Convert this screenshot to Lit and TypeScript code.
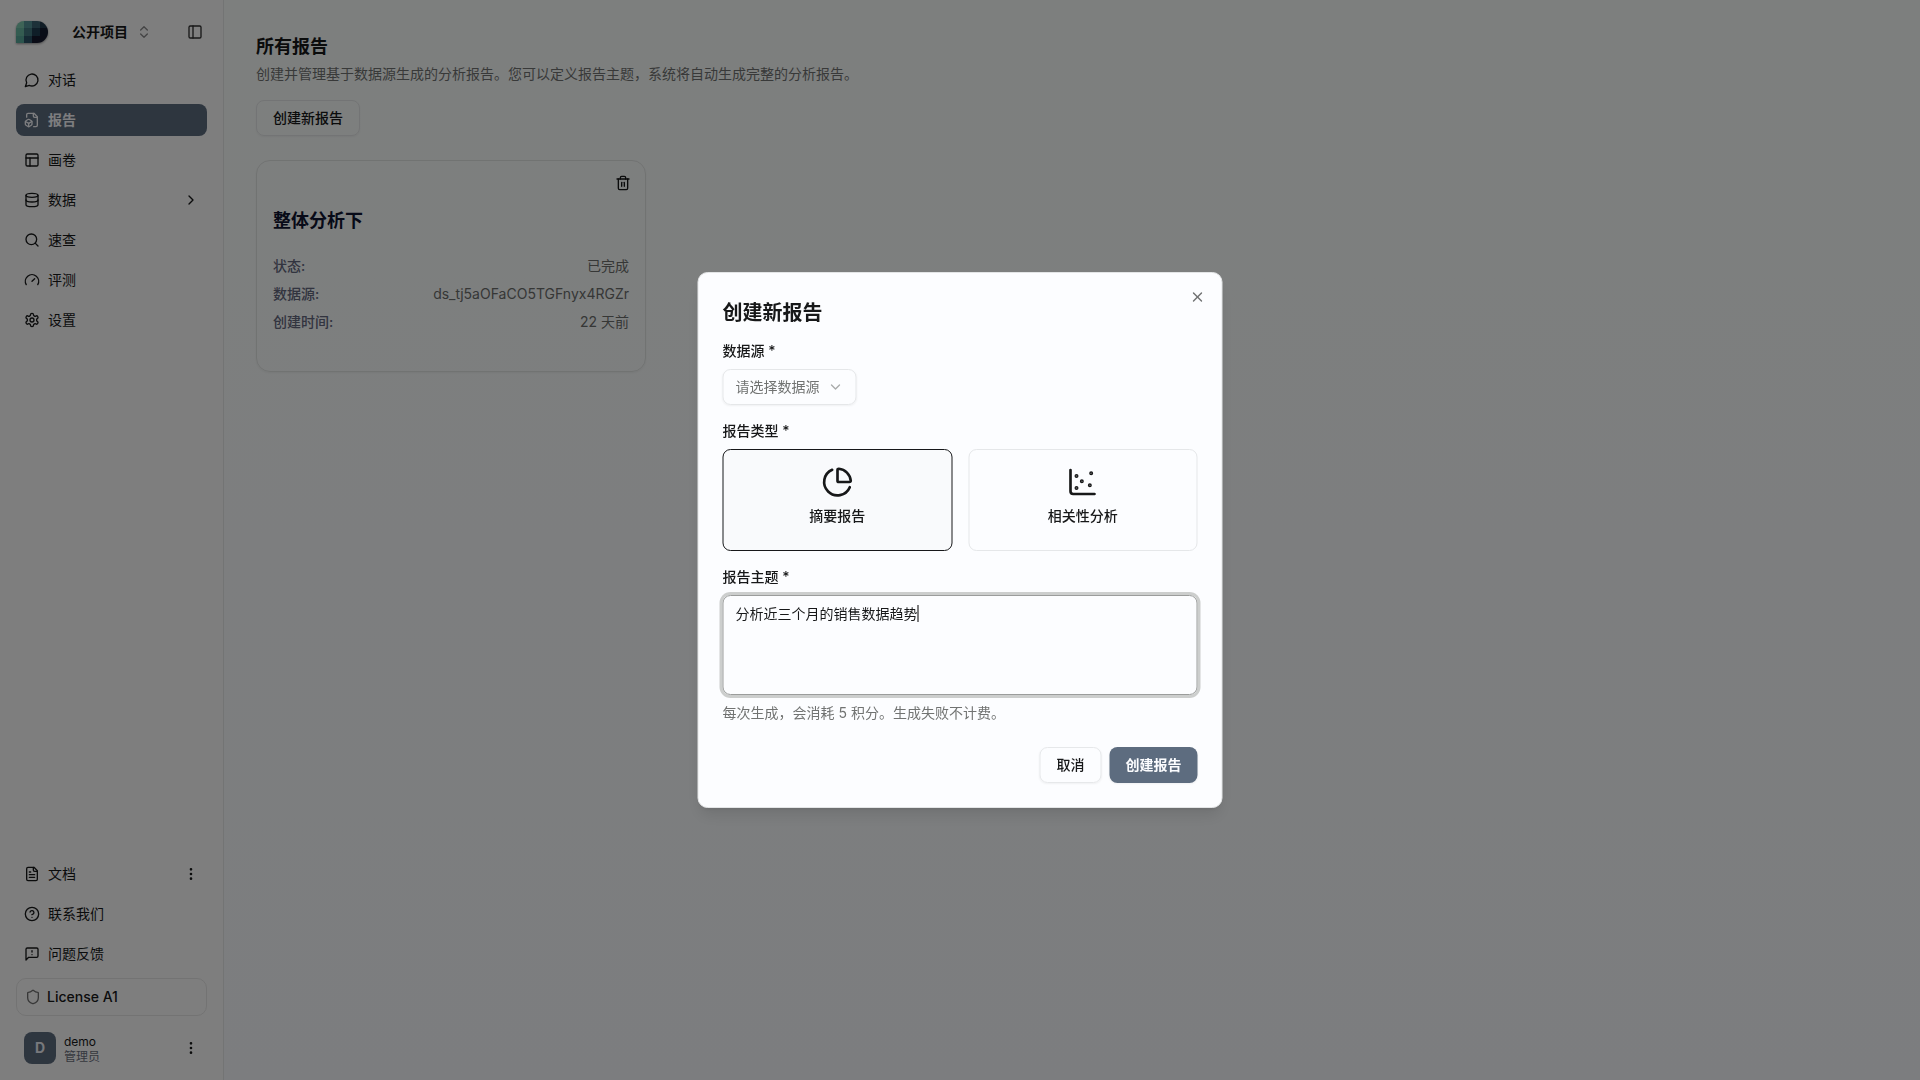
import { LitElement, html, css, svg } from "lit";
import { customElement, property, state } from "lit/decorators.js";

const icons: Record<string, unknown> = {
  chat: svg`<path d="M7.9 20A9 9 0 1 0 4 16.1L2 22Z"/>`,
  report: svg`<path d="M14 2v4a2 2 0 0 0 2 2h4"/><path d="M14.5 22H18a2 2 0 0 0 2-2V7l-5-5H6a2 2 0 0 0-2 2v3.8"/><path d="M11.7 14.2 7 17l-4.7-2.8"/><path d="M3 13.1a2 2 0 0 0-.999 1.76v3.24a2 2 0 0 0 .969 1.78L6 21.7a2 2 0 0 0 2.03.01L11 19.9a2 2 0 0 0 1-1.76V14.9a2 2 0 0 0-.97-1.78L8 11.3a2 2 0 0 0-2.03-.01Z"/><path d="M7 17v5"/>`,
  canvas: svg`<rect width="18" height="18" x="3" y="3" rx="2"/><path d="M3 9h18"/><path d="M9 21V9"/>`,
  database: svg`<ellipse cx="12" cy="5" rx="9" ry="3"/><path d="M3 5V19A9 3 0 0 0 21 19V5"/><path d="M3 12A9 3 0 0 0 21 12"/>`,
  search: svg`<circle cx="11" cy="11" r="8"/><path d="m21 21-4.3-4.3"/>`,
  gauge: svg`<path d="m12 14 4-4"/><path d="M3.34 19a10 10 0 1 1 17.32 0"/>`,
  settings: svg`<path d="M12.22 2h-.44a2 2 0 0 0-2 2v.18a2 2 0 0 1-1 1.73l-.43.25a2 2 0 0 1-2 0l-.15-.08a2 2 0 0 0-2.73.73l-.22.38a2 2 0 0 0 .73 2.73l.15.1a2 2 0 0 1 1 1.72v.51a2 2 0 0 1-1 1.74l-.15.09a2 2 0 0 0-.73 2.73l.22.38a2 2 0 0 0 2.73.73l.15-.08a2 2 0 0 1 2 0l.43.25a2 2 0 0 1 1 1.73V20a2 2 0 0 0 2 2h.44a2 2 0 0 0 2-2v-.18a2 2 0 0 1 1-1.73l.43-.25a2 2 0 0 1 2 0l.15.08a2 2 0 0 0 2.73-.73l.22-.39a2 2 0 0 0-.73-2.73l-.15-.08a2 2 0 0 1-1-1.74v-.5a2 2 0 0 1 1-1.74l.15-.09a2 2 0 0 0 .73-2.73l-.22-.38a2 2 0 0 0-2.73-.73l-.15.08a2 2 0 0 1-2 0l-.43-.25a2 2 0 0 1-1-1.73V4a2 2 0 0 0-2-2z"/><circle cx="12" cy="12" r="3"/>`,
  doc: svg`<path d="M15 2H6a2 2 0 0 0-2 2v16a2 2 0 0 0 2 2h12a2 2 0 0 0 2-2V7Z"/><path d="M14 2v4a2 2 0 0 0 2 2h4"/><path d="M10 9H8"/><path d="M16 13H8"/><path d="M16 17H8"/>`,
  help: svg`<circle cx="12" cy="12" r="10"/><path d="M9.09 9a3 3 0 0 1 5.83 1c0 2-3 3-3 3"/><path d="M12 17h.01"/>`,
  feedback: svg`<path d="M21 15a2 2 0 0 1-2 2H7l-4 4V5a2 2 0 0 1 2-2h14a2 2 0 0 1 2 2z"/><path d="M12 7v2"/><path d="M12 13h.01"/>`,
  shield: svg`<path d="M20 13c0 5-3.5 7.5-7.66 8.95a1 1 0 0 1-.67-.01C7.5 20.5 4 18 4 13V6a1 1 0 0 1 1-1c2 0 4.5-1.2 6.24-2.72a1.17 1.17 0 0 1 1.52 0C14.51 3.81 17 5 19 5a1 1 0 0 1 1 1z"/>`,
  dots: svg`<circle cx="12" cy="12" r="1"/><circle cx="12" cy="5" r="1"/><circle cx="12" cy="19" r="1"/>`,
  chevronRight: svg`<path d="m9 18 6-6-6-6"/>`,
  chevronDown: svg`<path d="m6 9 6 6 6-6"/>`,
  chevrons: svg`<path d="m7 15 5 5 5-5"/><path d="m7 9 5-5 5 5"/>`,
  panel: svg`<rect width="18" height="18" x="3" y="3" rx="2"/><path d="M9 3v18"/>`,
  trash: svg`<path d="M3 6h18"/><path d="M19 6v14c0 1-1 2-2 2H7c-1 0-2-1-2-2V6"/><path d="M8 6V4c0-1 1-2 2-2h4c1 0 2 1 2 2v2"/><path d="M10 11v6"/><path d="M14 11v6"/>`,
  close: svg`<path d="M18 6 6 18"/><path d="m6 6 12 12"/>`,
  pie: svg`<path d="M21 12c.552 0 1.005-.449.95-.998a10 10 0 0 0-8.953-8.951c-.55-.055-.998.398-.998.95v8a1 1 0 0 0 1 1z"/><path d="M21.21 15.89A10 10 0 1 1 8 2.83"/>`,
  scatter: svg`<circle cx="7.5" cy="7.5" r=".5" fill="currentColor"/><circle cx="18.5" cy="5.5" r=".5" fill="currentColor"/><circle cx="11.5" cy="11.5" r=".5" fill="currentColor"/><circle cx="7.5" cy="16.5" r=".5" fill="currentColor"/><circle cx="17.5" cy="14.5" r=".5" fill="currentColor"/><path d="M3 3v16a2 2 0 0 0 2 2h16"/>`,
};

const icon = (name: string, cls = "icon") =>
  html`<svg class=${cls} viewBox="0 0 24 24" aria-hidden="true">${icons[name]}</svg>`;

const shared = css`
  *, *::before, *::after { box-sizing: border-box; }
  button, select, textarea, input { font: inherit; color: inherit; margin: 0; }
  button { background: none; border: 0; padding: 0; cursor: pointer; }
  a { color: inherit; text-decoration: none; }
  h1, h2, p, dl, dd, dt, ul, fieldset, legend { margin: 0; padding: 0; border: 0; }
  ul { list-style: none; }
  svg { display: block; flex: none; }
  .icon, .icon-lg {
    width: 16px; height: 16px; fill: none; stroke: currentColor;
    stroke-width: 2; stroke-linecap: round; stroke-linejoin: round;
  }
  .icon-lg { width: 32px; height: 32px; }
  .btn {
    display: inline-flex; align-items: center; justify-content: center;
    height: 36px; padding: 0 16px; border: 1px solid #e6e8ea; border-radius: 8px;
    font-weight: 500; white-space: nowrap; box-shadow: 0 1px 2px rgba(0, 0, 0, 0.05);
  }
  .btn-primary { border: 0; background: #5d6c7f; color: #fcfdff; font-weight: 600; }
`;

@customElement("app-sidebar")
export class AppSidebar extends LitElement {
  static styles = [shared, css`
    :host {
      display: flex; flex-direction: column; width: 224px; flex: none;
      background: #fdfdfd; border-right: 1px solid #e6e9e8;
    }
    .top { display: flex; align-items: center; height: 64px; padding: 0 12px 0 16px; }
    .logo { width: 32px; height: 24px; filter: drop-shadow(0 1px 1px rgba(0, 0, 0, 0.4)); }
    .switcher { display: flex; align-items: center; gap: 8px; margin-left: 24px; font-weight: 600; }
    .switcher .icon { opacity: 0.5; }
    .collapse { display: flex; padding: 8px; margin-left: auto; color: #303030; }
    ul { display: flex; flex-direction: column; gap: 8px; padding: 0 16px; }
    .item {
      display: flex; align-items: center; gap: 8px; height: 32px; padding: 0 8px;
      border-radius: 8px; width: 100%;
    }
    .item.active { background: #5d6c7f; color: #fafbff; font-weight: 600; }
    .item .end { margin-left: auto; }
    .bottom { margin-top: auto; }
    .license {
      display: flex; align-items: center; gap: 6px; height: 38px; margin: 8px 16px;
      padding: 0 8px; border: 1px solid #e6e6e6; border-radius: 10px; font-weight: 500;
    }
    .license .icon { color: #707070; }
    .user { display: flex; align-items: center; gap: 8px; padding: 8px 24px 16px; width: 100%; text-align: left; }
    .avatar {
      display: grid; place-items: center; width: 32px; height: 32px; border-radius: 8px;
      background: #5d6c7f; color: #f0f2f8; font-weight: 700;
    }
    .who { display: flex; flex-direction: column; padding-top: 2px; font-size: 12px; line-height: 15px; }
    .role { color: #6b7080; }
    .user .end { margin-left: auto; }
  `];

  @property() active = "报告";

  private nav = [
    { icon: "chat", label: "对话" },
    { icon: "report", label: "报告" },
    { icon: "canvas", label: "画卷" },
    { icon: "database", label: "数据", end: "chevronRight" },
    { icon: "search", label: "速查" },
    { icon: "gauge", label: "评测" },
    { icon: "settings", label: "设置" },
  ];

  private links = [
    { icon: "doc", label: "文档", end: "dots" },
    { icon: "help", label: "联系我们" },
    { icon: "feedback", label: "问题反馈" },
  ];

  private item(i: { icon: string; label: string; end?: string }) {
    return html`<li><a class="item ${i.label === this.active ? "active" : ""}" href="#">
      ${icon(i.icon)}<span>${i.label}</span>${i.end ? icon(i.end, "icon end") : ""}
    </a></li>`;
  }

  render() {
    return html`
      <div class="top">
        <svg class="logo" viewBox="0 0 32 24" aria-hidden="true">
          <defs><clipPath id="c"><path d="M8 1H21A11 11 0 0 1 21 23H0V9A8 8 0 0 1 8 1Z"/></clipPath></defs>
          <g clip-path="url(#c)">
            <path fill="#7cc8ae" d="M0 1h8v7H0z"/><path fill="#549598" d="M8 1h8v7H8z"/>
            <path fill="#3a6272" d="M16 1h8v7h-8z"/><path fill="#223a4c" d="M24 1h8v7h-8z"/>
            <path fill="#68b8a2" d="M0 8h8v8H0z"/><path fill="#427880" d="M8 8h8v8H8z"/>
            <path fill="#1e3c50" d="M16 8h8v8h-8z"/><path fill="#121a2e" d="M24 8h8v8h-8z"/>
            <path fill="#58a89a" d="M0 16h8v7H0z"/><path fill="#2a5266" d="M8 16h8v7H8z"/>
            <path fill="#14182c" d="M16 16h16v7H16z"/>
          </g>
        </svg>
        <button class="switcher"><span>公开项目</span>${icon("chevrons")}</button>
        <button class="collapse" aria-label="收起侧边栏">${icon("panel")}</button>
      </div>
      <nav><ul>${this.nav.map((i) => this.item(i))}</ul></nav>
      <div class="bottom">
        <ul>${this.links.map((i) => this.item(i))}</ul>
        <div class="license">${icon("shield")}<span>License A1</span></div>
        <button class="user">
          <span class="avatar">D</span>
          <span class="who"><span>demo</span><span class="role">管理员</span></span>
          ${icon("dots", "icon end")}
        </button>
      </div>`;
  }
}

@customElement("report-card")
export class ReportCard extends LitElement {
  static styles = [shared, css`
    :host {
      display: block; border: 1px solid #e3e6e5; border-radius: 14px;
      box-shadow: 0 1px 2px rgba(0, 0, 0, 0.05);
    }
    .actions { display: flex; justify-content: flex-end; padding: 8px 8px 0; }
    .actions button { padding: 6px; }
    .body { display: flex; flex-direction: column; gap: 21px; padding: 10px 16px 39px; }
    h2 { font-size: 18px; line-height: 28px; font-weight: 600; color: #0f1430; }
    dl { display: flex; flex-direction: column; gap: 8px; }
    .row { display: flex; justify-content: space-between; }
    dt { color: #64687e; font-weight: 500; }
    dd { color: #6c6e6d; }
  `];

  @property() heading = "";
  @property() status = "";
  @property() source = "";
  @property() created = "";

  render() {
    return html`
      <div class="actions"><button aria-label="删除">${icon("trash")}</button></div>
      <div class="body">
        <h2>${this.heading}</h2>
        <dl>
          <div class="row"><dt>状态:</dt><dd>${this.status}</dd></div>
          <div class="row"><dt>数据源:</dt><dd>${this.source}</dd></div>
          <div class="row"><dt>创建时间:</dt><dd>${this.created}</dd></div>
        </dl>
      </div>`;
  }
}

@customElement("create-report-dialog")
export class CreateReportDialog extends LitElement {
  static styles = [shared, css`
    :host {
      position: fixed; top: 50%; left: 50%; transform: translate(-50%, -50%);
      width: 100%; max-width: 525px;
    }
    .dialog {
      position: relative; display: flex; flex-direction: column; gap: 16px; padding: 24px;
      background: #fcfdff; border: 1px solid #e3e5e6; border-radius: 10px;
      box-shadow: 0 10px 15px -3px rgba(0, 0, 0, 0.1), 0 4px 6px -4px rgba(0, 0, 0, 0.1);
    }
    h2 { padding-top: 4px; font-size: 20px; line-height: 24px; font-weight: 600; }
    .close { position: absolute; top: 16px; right: 16px; color: #6f7172; }
    .field { display: flex; flex-direction: column; align-items: flex-start; gap: 8px; min-width: 0; }
    .label { font-weight: 500; line-height: 20px; }
    .select { display: grid; align-items: center; }
    .select > * { grid-area: 1 / 1; }
    select {
      appearance: none; height: 36px; padding: 0 36px 0 12px; background: none;
      border: 1px solid #e5e7e9; border-radius: 8px; color: #717372;
      box-shadow: 0 1px 2px rgba(0, 0, 0, 0.05);
    }
    .select .icon { justify-self: end; margin-right: 13px; color: #717372; opacity: 0.6; pointer-events: none; }
    .types { display: grid; grid-template-columns: 1fr 1fr; gap: 16px; width: 100%; }
    .type {
      display: flex; flex-direction: column; align-items: center; gap: 8px;
      padding: 16px 16px 24px; border: 1px solid #e5e7e9; border-radius: 8px;
      font-weight: 500; cursor: pointer;
    }
    .type input { appearance: none; position: absolute; margin: 0; }
    .type:has(input:checked) { border-color: #17181a; background: #f9fafc; }
    fieldset { width: 100%; }
    legend { margin-bottom: 8px; }
    .topic { position: relative; width: 100%; }
    textarea {
      display: block; width: 100%; height: 100px; padding: 8px 12px; resize: none; outline: 0;
      background: none; border: 1px solid #9b9d9c; border-radius: 8px;
      box-shadow: 0 0 0 3px #cccecd; caret-color: transparent;
    }
    .caret { position: absolute; top: 10px; left: 195px; width: 1px; height: 17px; background: #000; }
    .hint { color: #717372; }
    .footer { display: flex; justify-content: flex-end; gap: 8px; padding-top: 8px; }
  `];

  @state() private type = "summary";

  private option(value: string, name: string, label: string) {
    return html`<label class="type">
      <input type="radio" name="type" .value=${value} ?checked=${this.type === value}
        @change=${() => (this.type = value)} />
      ${icon(name, "icon-lg")}<span>${label}</span>
    </label>`;
  }

  render() {
    return html`
      <form class="dialog" role="dialog" aria-modal="true" aria-labelledby="title">
        <h2 id="title">创建新报告</h2>
        <div class="field">
          <label class="label" for="source">数据源 *</label>
          <div class="select">
            <select id="source"><option>请选择数据源</option></select>
            ${icon("chevronDown")}
          </div>
        </div>
        <fieldset>
          <legend class="label">报告类型 *</legend>
          <div class="types">
            ${this.option("summary", "pie", "摘要报告")}
            ${this.option("correlation", "scatter", "相关性分析")}
          </div>
        </fieldset>
        <div class="field">
          <label class="label" for="topic">报告主题 *</label>
          <div class="topic">
            <textarea id="topic" spellcheck="false" .value=${"分析近三个月的销售数据趋势"}></textarea>
            <span class="caret"></span>
          </div>
          <p class="hint">每次生成，会消耗 5 积分。生成失败不计费。</p>
        </div>
        <div class="footer">
          <button type="button" class="btn">取消</button>
          <button type="button" class="btn btn-primary">创建报告</button>
        </div>
        <button type="button" class="close" aria-label="关闭">${icon("close")}</button>
      </form>`;
  }
}

@customElement("app-root")
export class AppRoot extends LitElement {
  static styles = [shared, css`
    :host {
      display: flex; min-height: 100vh; color: #171819; font-size: 14px; line-height: 20px;
      font-family: Inter, "Noto Sans CJK SC", sans-serif;
      background: linear-gradient(#fbfffd, #f9fbff);
    }
    main { flex: 1; min-width: 0; padding: 32px; }
    h1 { font-size: 18px; line-height: 30px; font-weight: 600; }
    .lead { margin: 2px 0 16px; color: #717372; }
    .grid {
      display: grid; grid-template-columns: repeat(auto-fill, minmax(320px, 1fr));
      gap: 24px; margin-top: 24px;
    }
    .overlay { position: fixed; inset: 0; background: rgba(0, 0, 0, 0.5); }
  `];

  render() {
    return html`
      <app-sidebar></app-sidebar>
      <main>
        <h1>所有报告</h1>
        <p class="lead">创建并管理基于数据源生成的分析报告。您可以定义报告主题，系统将自动生成完整的分析报告。</p>
        <button class="btn">创建新报告</button>
        <div class="grid">
          <report-card heading="整体分析下" status="已完成"
            source="ds_tj5aOFaCO5TGFnyx4RGZr" created="22 天前"></report-card>
        </div>
      </main>
      <div class="overlay"></div>
      <create-report-dialog></create-report-dialog>`;
  }
}
